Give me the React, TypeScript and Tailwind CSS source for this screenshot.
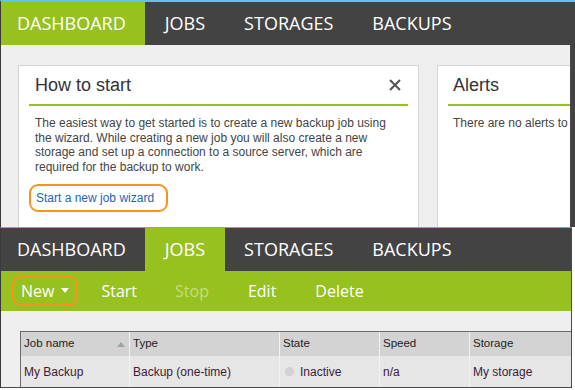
import React from 'react';

const navFont = { fontFamily: '"Open Sans", "Noto Sans", sans-serif' };

const tabs = ['DASHBOARD', 'JOBS', 'STORAGES', 'BACKUPS'];

function NavBar({ active }: { active: string }) {
  return (
    <div className="flex h-[43px] bg-[#434343] text-white text-[18px]" style={navFont}>
      {tabs.map((t) => (
        <div
          key={t}
          className={`flex items-center px-[19.5px] ${t === active ? 'bg-[#97c11f]' : ''} ${
            t === 'DASHBOARD' ? 'pl-[16px]' : ''
          }`}
        >
          {t}
        </div>
      ))}
    </div>
  );
}

export default function App() {
  return (
    <div className="w-[575px] h-[390px] bg-white overflow-hidden" style={{ fontFamily: '"Liberation Sans", Arial, sans-serif' }}>
      {/* Dashboard screenshot */}
      <div className="h-[227px] flex flex-col border-t-2 border-[#5fc3ea] border-l border-l-[#3a3a3a] bg-[#434343]">
        <NavBar active="DASHBOARD" />
        <div className="flex-1 flex gap-[18px] pl-[17px] pt-[20px] bg-[#efefef] w-[570px] border-r border-[#4a4a4a] overflow-hidden">
          <div className="w-[401px] shrink-0 bg-white border border-b-0 border-[#d4d4d4] px-[10px]">
            <div className="flex items-center justify-between h-[40px] px-[6px] border-b-2 border-[#97c11f]">
              <span className="text-[18px] text-[#333]">How to start</span>
              <svg width="12" height="12" viewBox="0 0 12 12" className="mr-[1px]">
                <path d="M1 1 L11 11 M11 1 L1 11" stroke="#555" strokeWidth="2" />
              </svg>
            </div>
            <p className="mt-[10px] px-[6px] text-[12px] leading-[14.5px] text-[#444]">
              The easiest way to get started is to create a new backup job using the wizard. While creating a new job
              you will also create a new storage and set up a connection to a source server, which are required for the
              backup to work.
            </p>
            <div className="mt-[10px] inline-flex items-center h-[28px] pl-[5px] pr-[12px] border-2 border-[#f7941d] rounded-[9px]">
              <span className="text-[12px] text-[#1f64b5]">Start a new job wizard</span>
            </div>
          </div>
          <div className="flex-1 min-w-0 bg-white border border-b-0 border-r-0 border-[#d4d4d4] pl-[10px] overflow-hidden">
            <div className="flex items-center h-[40px] px-[5px] border-b-2 border-[#97c11f]">
              <span className="text-[18px] text-[#333]">Alerts</span>
            </div>
            <p className="mt-[10px] px-[5px] text-[12px] leading-[14px] text-[#444] whitespace-nowrap">
              There are no alerts to display.
            </p>
          </div>
        </div>
      </div>

      {/* Jobs screenshot */}
      <div className="h-[161px] flex flex-col border-t border-[#7aa9c4] border-l border-l-[#3a3a3a] w-[572px] border-r border-r-[#4a4a4a]">
        <NavBar active="JOBS" />
        <div className="flex items-center h-[40px] bg-[#97c11f] text-white text-[16px] pl-[11px]" style={navFont}>
          <div className="flex items-center gap-[7px] h-[30px] px-[7px] border-2 border-[#f7941d] rounded-[8px]">
            <span>New</span>
            <svg width="8" height="6" viewBox="0 0 8 6">
              <path d="M0 0 L8 0 L4 5 Z" fill="#fff" />
            </svg>
          </div>
          <span className="ml-[23px]">Start</span>
          <span className="ml-[38px] text-[#c4dd7e]">Stop</span>
          <span className="ml-[39px]">Edit</span>
          <span className="ml-[39px]">Delete</span>
        </div>
        <div className="flex-1 bg-[#efefef] pl-[19px] pt-[20px] border-b border-[#4a4a4a] overflow-hidden">
          <div className="border-l border-t border-[#6a6a6a] text-[11.5px] text-[#222]">
            <div className="flex h-[24px] bg-[#d3d3d3]">
              <div className="w-[109px] flex items-center justify-between pl-[3px] pr-[4px] border-r border-[#f2f2f2]">
                <span>Job name</span>
                <svg width="8" height="5" viewBox="0 0 8 5">
                  <path d="M0 5 L4 0 L8 5 Z" fill="#9aa3a8" />
                </svg>
              </div>
              <div className="w-[150px] flex items-center pl-[3px] border-r border-[#f2f2f2]">Type</div>
              <div className="w-[100px] flex items-center pl-[3px] border-r border-[#f2f2f2]">State</div>
              <div className="w-[90px] flex items-center pl-[3px] border-r border-[#f2f2f2]">Speed</div>
              <div className="flex-1 flex items-center pl-[3px]">Storage</div>
            </div>
            <div className="flex h-[31px] bg-[#e6e6e6] text-[#3d1a36] text-[12px]">
              <div className="w-[109px] flex items-center pl-[3px] border-r border-[#f2f2f2]">My Backup</div>
              <div className="w-[150px] flex items-center pl-[3px] border-r border-[#f2f2f2]">Backup (one-time)</div>
              <div className="w-[100px] flex items-center gap-[6px] pl-[5px] border-r border-[#f2f2f2]">
                <span className="w-[9px] h-[9px] rounded-full bg-[#d2d2d2]" />
                <span>Inactive</span>
              </div>
              <div className="w-[90px] flex items-center pl-[3px] border-r border-[#f2f2f2]">n/a</div>
              <div className="flex-1 flex items-center pl-[3px]">My storage</div>
            </div>
          </div>
        </div>
      </div>
    </div>
  );
}
